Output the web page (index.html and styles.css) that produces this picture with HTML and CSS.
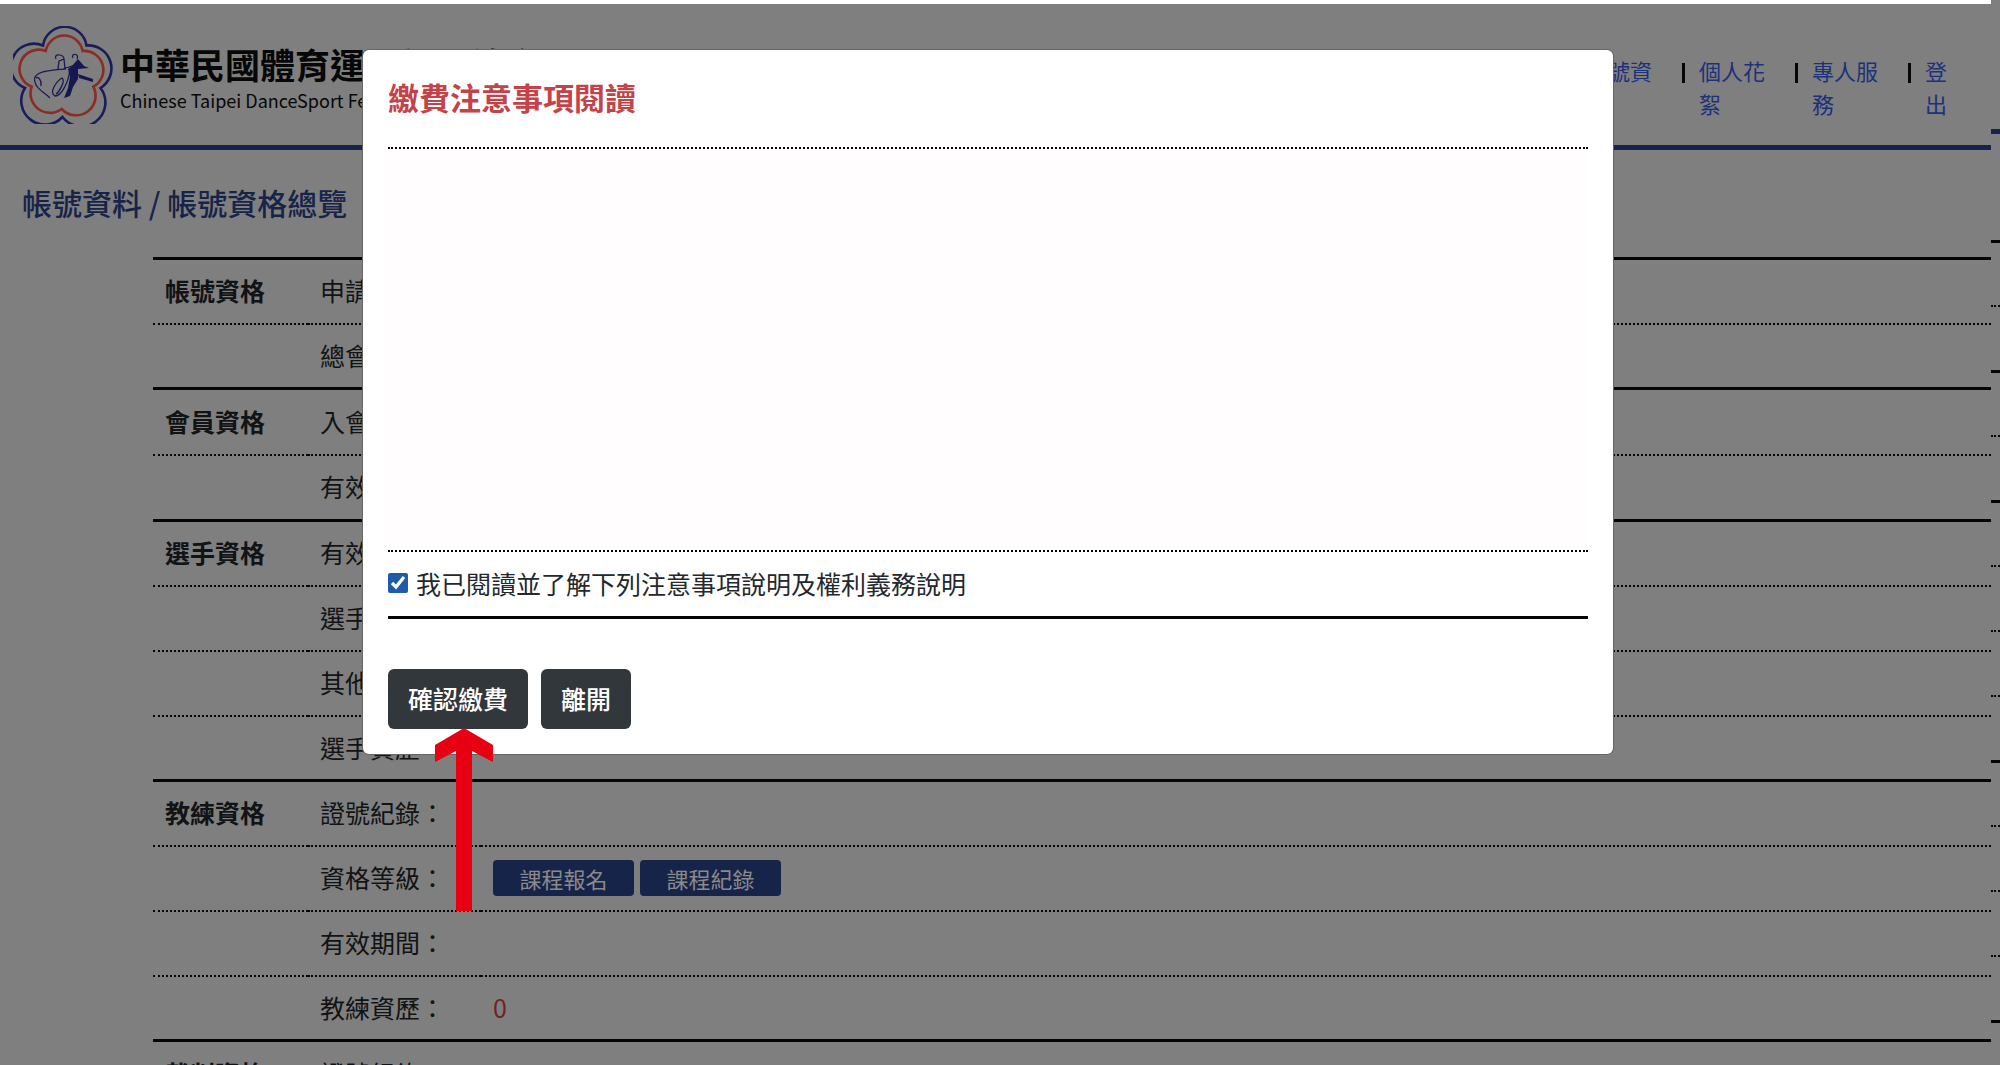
FILE: index.html
```html
<!DOCTYPE html>
<html lang="zh-Hant">
<head>
<meta charset="utf-8">
<title>帳號資格總覽</title>
<link rel="stylesheet" href="styles.css">
</head>
<body>
<div class="window">
  <div class="screen">
    <header class="header">
      <a class="brand" href="#">
        <svg class="logo" viewBox="0 0 100 98" aria-hidden="true">
          <g fill="none" stroke-linejoin="miter">
            <path stroke="#1b1c5c" stroke-width="2.6" d="M30 19.500 A22 22 0 0 1 73.500 19.500 A23 23 0 0 1 87.500 62 A23.800 23.800 0 0 1 49.500 91 A23.800 23.800 0 0 1 12 62 A23 23 0 0 1 30 19.500Z"/>
            <path stroke="#892d25" stroke-width="2.600" d="M32.700 25 A18.800 18.800 0 0 1 69.700 25 A19 19 0 0 1 80.300 60.700 A19.500 19.500 0 0 1 48.700 83 A19.500 19.500 0 0 1 18.700 60.700 A19 19 0 0 1 32.700 25Z"/>
            <path stroke="#1b1b55" stroke-width="1.300" d="M53 43 C39 44 18 45 22 56 C23 63 31 66 37 72 M23 52 C25 50 29 54 28 60 M43 33 C40 27 51 28 51 33 L46 35 L45 43 M51 33 L52 43 M60 32 C57 27 67 27 64 33 M50 43 L65 38 M57 42 C56 57 48 70 42 70 C35 66 45 54 49 52 C53 55 46 66 43 68"/>
            <path fill="#17174f" d="M59 40 L65 33 L71 40 L76 42 L65 43 L65 53 L60 61 L57 70 L51 72 L55 62 L57 51 L55 43Z M65 48 L80 53 L80 56 L66 52Z"/>
          </g>
        </svg>
        <span class="brand-text">
          <strong class="brand-name">中華民國體育運動舞蹈總會</strong>
          <span class="brand-sub">Chinese Taipei DanceSport Federation</span>
        </span>
      </a>
      <nav class="nav">
        <a class="nav-link" href="#">帳號資料</a>
        <a class="nav-link" href="#">個人花絮</a>
        <a class="nav-link" href="#">專人服務</a>
        <a class="nav-link nav-last" href="#">登出</a>
      </nav>
    </header>
    <main>
      <h1 class="page-title">帳號資料 / 帳號資格總覽</h1>
      <table class="records">
        <tbody>
          <tr><th scope="rowgroup">帳號資格</th><td class="field">申請日期：</td><td></td></tr>
          <tr><th></th><td class="field">總會審核：</td><td></td></tr>
        </tbody>
        <tbody class="member">
          <tr><th scope="rowgroup">會員資格</th><td class="field">入會日期：</td><td></td></tr>
          <tr><th></th><td class="field">有效期間：</td><td></td></tr>
        </tbody>
        <tbody>
          <tr><th scope="rowgroup">選手資格</th><td class="field">有效期間：</td><td></td></tr>
          <tr><th></th><td class="field">選手級別：</td><td></td></tr>
          <tr><th></th><td class="field">其他資格：</td><td></td></tr>
          <tr><th></th><td class="field">選手資歷</td><td></td></tr>
        </tbody>
        <tbody>
          <tr><th scope="rowgroup">教練資格</th><td class="field">證號紀錄：</td><td></td></tr>
          <tr><th></th><td class="field">資格等級：</td><td><div class="actions"><button class="course" type="button">課程報名</button><button class="course" type="button">課程紀錄</button></div></td></tr>
          <tr><th></th><td class="field">有效期間：</td><td></td></tr>
          <tr><th></th><td class="field">教練資歷：</td><td class="count">0</td></tr>
        </tbody>
        <tbody>
          <tr><th scope="rowgroup">裁判資格</th><td class="field">證號紀錄：</td><td></td></tr>
        </tbody>
      </table>
    </main>
    <div class="overlay">
      <section class="dialog" role="dialog" aria-labelledby="notice-title">
        <h2 class="dialog-title" id="notice-title">繳費注意事項閱讀</h2>
        <div class="notice"></div>
        <label class="agree"><input class="check" type="checkbox" checked>我已閱讀並了解下列注意事項說明及權利義務說明</label>
        <div class="buttons">
          <div class="confirm">
            <button class="btn" type="button">確認繳費</button>
            <svg class="arrow" viewBox="0 0 58 183" aria-hidden="true"><path fill="#e60012" d="M29 0 L58 17 V34 L37 23 V183 H21 V23 L0 34 V17Z"/></svg>
          </div>
          <button class="btn" type="button">離開</button>
        </div>
      </section>
    </div>
  </div>
  <aside class="edge" aria-hidden="true">
    <div class="edge-head"></div>
    <div class="edge-gap"></div>
    <div class="edge-group"><i></i><i></i></div>
    <div class="edge-group"><i></i><i></i></div>
    <div class="edge-group"><i></i><i></i><i></i><i></i></div>
    <div class="edge-group"><i></i><i></i><i></i><i></i></div>
    <div class="edge-group"></div>
  </aside>
</div>
</body>
</html>
```
FILE: styles.css
```css
* { box-sizing: border-box; }

body {
  margin: 0;
  background: #7f7f7f;
  color: #111315;
  font: 25px/38px "Noto Sans CJK TC", sans-serif;
}

a { text-decoration: none; }
button { font-family: inherit; border: 0; }

.window {
  display: flex;
  height: 100vh;
  overflow: hidden;
}

.screen {
  position: relative;
  flex: 1;
  min-width: 0;
  border-top: 4px solid #fff;
}

.header {
  display: flex;
  justify-content: space-between;
  height: 146px;
  padding: 22px 38px 0 13px;
  border-bottom: 5px solid #172449;
}

.brand {
  display: flex;
  gap: 7px;
  color: #070707;
  white-space: nowrap;
}
.logo { width: 100px; height: 98px; }
.brand-text { padding-top: 16px; }
.brand-name { display: block; font-size: 35px; line-height: 44px; font-weight: 700; }
.brand-sub { display: block; font-size: 18px; line-height: 28px; }

.nav {
  display: flex;
  gap: 28px;
  padding-top: 28px;
  font-size: 22px;
  line-height: 33px;
}
.nav-link {
  position: relative;
  width: 85px;
  padding-left: 17px;
  color: #1d317a;
}
.nav-link::before {
  content: "";
  position: absolute;
  left: 0;
  top: 9px;
  width: 3px;
  height: 20px;
  background: #070707;
}
.nav-last { width: 45px; }

.page-title {
  margin: 0;
  padding: 30px 22px 32px;
  color: #172449;
  font-size: 30px;
  line-height: 45px;
  font-weight: 500;
}

.records {
  width: calc(100% - 153px);
  margin-left: 153px;
  border-collapse: collapse;
  table-layout: fixed;
}
.records tr { height: 65px; border-top: 2px dotted #050505; }
.records .member tr { height: 66px; }
.records tbody tr:first-child { border-top: 3px solid #080305; }
.records th { width: 155px; padding: 0 12px 2px; text-align: left; font-weight: 700; }
.records td { padding: 0 12px 2px; white-space: nowrap; }
.records .field { width: 173px; }
.records .count { color: #6d2428; }

.actions { display: flex; gap: 6px; padding-top: 2px; }
.course {
  width: 141px;
  height: 36px;
  padding: 0;
  border-radius: 4px;
  background: #172449;
  color: #8a8a8a;
  font-size: 22px;
  line-height: 34px;
}

.overlay {
  position: absolute;
  inset: 0;
  padding: 46px 15px 0 0;
}
.dialog {
  width: 1250px;
  max-width: 90%;
  margin: 0 auto;
  padding: 24px 25px 25px;
  border-radius: 6px;
  background: #fff;
  box-shadow: 0 0 0 1px #666;
}
.dialog-title {
  margin: 0 0 27px;
  color: #c24349;
  font-size: 31px;
  line-height: 46px;
  font-weight: 700;
}
.notice {
  height: 405px;
  border: dotted #050505;
  border-width: 2px 0;
  background: #fffdfe;
}
.agree {
  display: flex;
  align-items: center;
  gap: 8px;
  height: 67px;
  padding-bottom: 2px;
  border-bottom: 3px solid #050505;
  color: #24282c;
}
.check { width: 20px; height: 20px; margin: 0; accent-color: #205aaa; }
.buttons { display: flex; gap: 13px; padding-top: 50px; }
.confirm { position: relative; }
.btn {
  height: 60px;
  padding: 0 20px 2px;
  border-radius: 6px;
  background: #32373c;
  color: #fff;
  font-size: 25px;
  line-height: 58px;
  font-weight: 500;
}
.arrow {
  position: absolute;
  left: 47px;
  top: 59px;
  width: 58px;
  height: 183px;
}

.edge { width: 9px; }
.edge-head { height: 134px; border-bottom: 5px solid #172449; }
.edge-gap { height: 106px; }
.edge-group { border-top: 3px solid #080305; }
.edge-group i { display: block; height: 62px; }
.edge-group i + i { height: 65px; border-top: 2px dotted #050505; }
```
